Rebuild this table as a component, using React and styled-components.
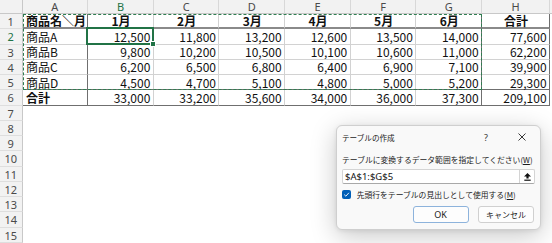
import React from "react"
import styled, { createGlobalStyle } from "styled-components"

const GlobalStyle = createGlobalStyle`
  html, body {
    margin: 0;
    padding: 0;
    background: #fff;
  }
  body {
    font-family: "Noto Sans CJK JP", "Noto Sans", sans-serif;
    overflow: hidden;
  }
`

const ROW_H = 15.25
const COLS = ["A", "B", "C", "D", "E", "F", "G", "H"]

const rows = [
  ["商品名＼月", "1月", "2月", "3月", "4月", "5月", "6月", "合計"],
  ["商品A", 12500, 11800, 13200, 12600, 13500, 14000, 77600],
  ["商品B", 9800, 10200, 10500, 10100, 10600, 11000, 62200],
  ["商品C", 6200, 6500, 6800, 6400, 6900, 7100, 39900],
  ["商品D", 4500, 4700, 5100, 4800, 5000, 5200, 29300],
  ["合計", 33000, 33200, 35600, 34000, 36000, 37300, 209100],
]

const lineColor = {
  light: "#d2d2d2",
  dark: "#6f6f6f",
}

const Sheet = styled.div`
  position: relative;
  width: 552px;
  height: 243px;
  overflow: hidden;
  display: grid;
  grid-template-columns: 22.5px repeat(7, 65.67px) 68px 60px;
  grid-template-rows: 14px repeat(15, ${ROW_H}px);
`

const HeadBase = styled.div`
  box-sizing: border-box;
  background: #f2f2f2;
  display: flex;
  align-items: center;
  justify-content: center;
  font-family: "Noto Sans", sans-serif;
  font-size: 11px;
  line-height: 1;
  color: ${({ $current }) => ($current ? "#217346" : "#4a4a4a")};
`

const Corner = styled(HeadBase)`
  border-right: 1px solid #c8c8c8;
  border-bottom: 1px solid #c8c8c8;
`

const ColHead = styled(HeadBase)`
  border-right: 1px solid #d8d8d8;
  border-bottom: 1px solid #c8c8c8;
`

const RowHead = styled(HeadBase)`
  border-right: 1px solid #c8c8c8;
  border-bottom: 1px solid #dedede;
  padding-top: 1px;
`

const Cell = styled.div`
  position: relative;
  box-sizing: border-box;
  display: flex;
  align-items: center;
  justify-content: ${({ $align }) =>
    $align === "right" ? "flex-end" : $align === "center" ? "center" : "flex-start"};
  padding: 1px 2.5px 0 3.5px;
  font-size: 12px;
  line-height: 1;
  font-weight: ${({ $bold }) => ($bold ? 700 : 400)};
  color: #111;
  white-space: nowrap;
  border-right: ${({ $right }) => ($right ? `1px solid ${lineColor[$right]}` : "none")};
  border-bottom: ${({ $bottom }) =>
    $bottom === "thick"
      ? "2px solid #8a8a8a"
      : $bottom
      ? `1px solid ${lineColor[$bottom]}`
      : "none"};

  ${({ $active }) =>
    $active &&
    `
    &::after {
      content: "";
      position: absolute;
      left: -2px;
      top: -2px;
      right: -1px;
      bottom: -1px;
      border: 2px solid #217346;
      pointer-events: none;
    }
    &::before {
      content: "";
      position: absolute;
      right: -3px;
      bottom: -3px;
      width: 4px;
      height: 4px;
      background: #217346;
      border: 1px solid #fff;
      z-index: 1;
    }
  `}
`

const Marquee = styled.div`
  position: absolute;
  left: 22.5px;
  top: 13.5px;
  width: 459.5px;
  height: 76.5px;
  box-sizing: border-box;
  border: 1px dashed #2f7d50;
  pointer-events: none;
`

/* ---- dialog ---- */

const Dialog = styled.div`
  position: absolute;
  left: 336px;
  top: 125px;
  width: 205px;
  height: 105px;
  box-sizing: border-box;
  padding: 0 5px 0 5px;
  display: flex;
  flex-direction: column;
  background: #f9f9f9;
  border: 1px solid #cfcfcf;
  border-radius: 6px;
  box-shadow: 0 6px 26px rgba(0, 0, 0, 0.22), 0 1px 4px rgba(0, 0, 0, 0.08);
  font-family: "Noto Sans CJK JP", sans-serif;
  font-size: 7.8px;
  color: #1b1b1b;
`

const TitleBar = styled.div`
  display: flex;
  align-items: center;
  height: 22px;
  margin-right: 3px;
`

const Title = styled.div`
  flex: 1;
  font-size: 7.6px;
`

const TitleButton = styled.div`
  width: 20px;
  display: flex;
  justify-content: center;
  align-items: center;
  font-family: "Noto Sans", sans-serif;
  font-size: 9px;
  color: #333;
  & + & {
    margin-left: 16px;
  }
`

const FieldLabel = styled.div`
  margin-top: 7px;
  line-height: 10px;
  white-space: nowrap;
  u {
    text-underline-offset: 1px;
  }
`

const RangeBox = styled.div`
  margin-top: 4px;
  height: 15px;
  box-sizing: border-box;
  display: flex;
  background: #fff;
  border: 1px solid #d4d4d4;
  border-bottom-color: #a8a8a8;
  border-radius: 2px;
`

const RangeText = styled.div`
  flex: 1;
  display: flex;
  align-items: center;
  padding-left: 2px;
  font-family: "Noto Sans", sans-serif;
  font-size: 9.5px;
  color: #111;
`

const CollapseButton = styled.div`
  width: 14px;
  display: flex;
  align-items: center;
  justify-content: center;
  border-left: 1px solid #d4d4d4;
`

const CheckRow = styled.label`
  margin-top: 5px;
  height: 11px;
  display: flex;
  align-items: center;
  gap: 5.7px;
  white-space: nowrap;
  u {
    text-underline-offset: 1px;
  }
`

const CheckBox = styled.span`
  width: 9px;
  height: 9px;
  border-radius: 2px;
  background: #005fb8;
  display: flex;
  align-items: center;
  justify-content: center;
`

const Buttons = styled.div`
  margin-top: 6px;
  margin-right: 1px;
  display: flex;
  justify-content: flex-end;
  gap: 9.5px;
`

const Button = styled.div`
  width: 56px;
  height: 17px;
  box-sizing: border-box;
  display: flex;
  align-items: center;
  justify-content: center;
  background: #fdfdfd;
  border: 1px solid ${({ $primary }) => ($primary ? "#8db3dc" : "#d0d0d0")};
  border-radius: 3px;
  font-size: ${({ $latin }) => ($latin ? "9px" : "8px")};
  font-family: ${({ $latin }) =>
    $latin ? `"Noto Sans", sans-serif` : `"Noto Sans CJK JP", sans-serif`};
  color: #1b1b1b;
`

const fmt = (v) => (typeof v === "number" ? v.toLocaleString("en-US") : v)

// borders of the A1:H6 block: thin grey inside, dark frame on A, H and the total row
const cellProps = (r, c) => {
  if (r > 6 || c > 7) return {}
  const right = c === 0 || c === 6 || c === 7 ? "dark" : "light"
  const bottom = r === 1 ? "thick" : r === 5 || r === 6 ? "dark" : "light"
  const isHead = r === 1
  return {
    $right: right,
    $bottom: bottom,
    $bold: isHead || (r === 6 && c === 0),
    $align: c === 0 ? "left" : isHead ? "center" : "right",
    $active: r === 2 && c === 1,
    children: fmt(rows[r - 1][c]),
  }
}

const CreateTableDialog = () => (
  <Dialog>
    <TitleBar>
      <Title>テーブルの作成</Title>
      <TitleButton>?</TitleButton>
      <TitleButton>
        <svg width="8" height="8" viewBox="0 0 8 8">
          <path d="M0.5 0.5 L7.5 7.5 M7.5 0.5 L0.5 7.5" stroke="#222" strokeWidth="0.9" />
        </svg>
      </TitleButton>
    </TitleBar>
    <FieldLabel>
      テーブルに変換するデータ範囲を指定してください(<u>W</u>)
    </FieldLabel>
    <RangeBox>
      <RangeText>$A$1:$G$5</RangeText>
      <CollapseButton>
        <svg width="7" height="8" viewBox="0 0 7 8">
          <path d="M3.5 0 L7 3.4 H4.6 V5.6 H2.4 V3.4 H0 Z" fill="#111" />
          <rect x="0.3" y="6.6" width="6.4" height="1.2" fill="#111" />
        </svg>
      </CollapseButton>
    </RangeBox>
    <CheckRow>
      <CheckBox>
        <svg width="7" height="7" viewBox="0 0 7 7">
          <path d="M1.2 3.6 L2.9 5.2 L5.9 1.8" stroke="#fff" strokeWidth="0.9" fill="none" />
        </svg>
      </CheckBox>
      <span>
        先頭行をテーブルの見出しとして使用する(<u>M</u>)
      </span>
    </CheckRow>
    <Buttons>
      <Button $primary $latin>OK</Button>
      <Button>キャンセル</Button>
    </Buttons>
  </Dialog>
)

export default function App() {
  const cells = [<Corner key="corner" />]
  COLS.forEach((col) => {
    cells.push(
      <ColHead key={`h-${col}`} $current={col === "B"}>
        {col}
      </ColHead>
    )
  })
  cells.push(<ColHead key="h-rest" />)

  for (let r = 1; r <= 15; r++) {
    cells.push(
      <RowHead key={`r-${r}`} $current={r === 2}>
        {r}
      </RowHead>
    )
    for (let c = 0; c <= COLS.length; c++) {
      cells.push(<Cell key={`${r}-${c}`} {...cellProps(r, c)} />)
    }
  }

  return (
    <>
      <GlobalStyle />
      <Sheet>
        {cells}
        <Marquee />
        <CreateTableDialog />
      </Sheet>
    </>
  )
}
